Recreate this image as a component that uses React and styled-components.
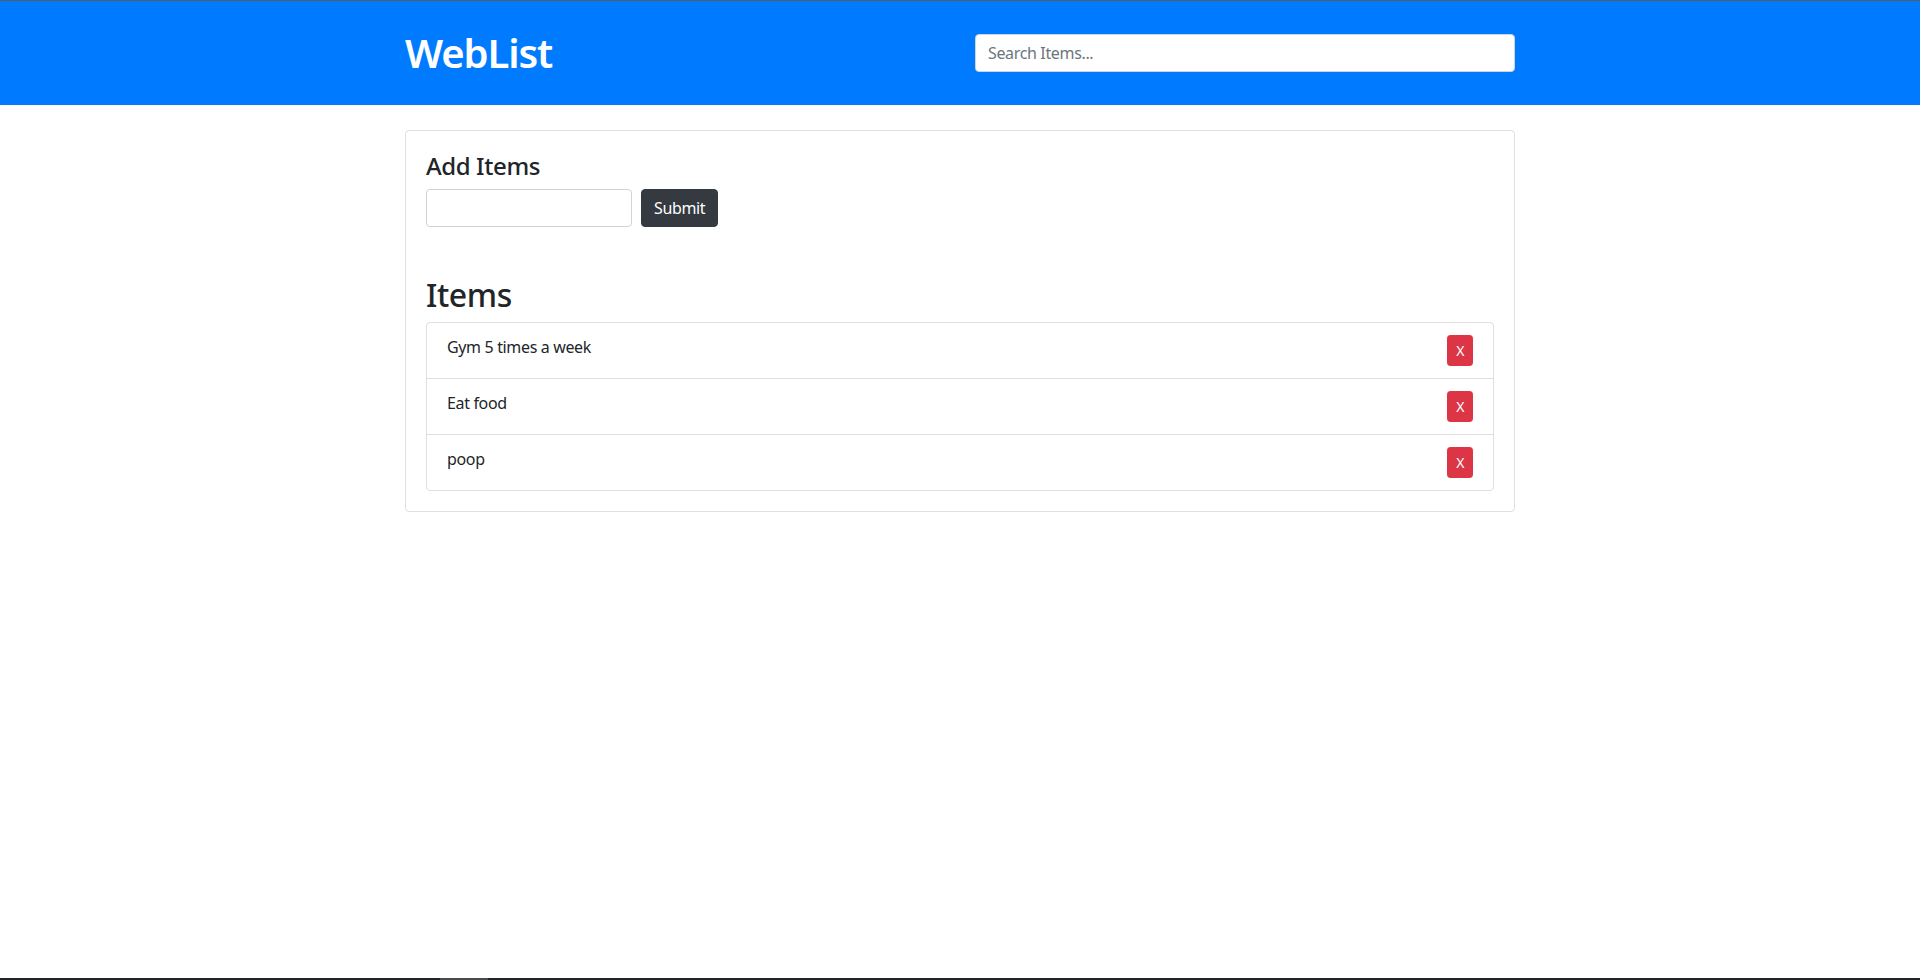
import React, { useState } from "react";
import styled, { createGlobalStyle } from "styled-components";

const GlobalStyle = createGlobalStyle`
  *, *::before, *::after { box-sizing: border-box; }
  body {
    margin: 0;
    font-family: "Noto Sans", "Open Sans", sans-serif;
    font-size: 16px;
    line-height: 1.5;
    letter-spacing: -0.35px;
    color: #212529;
    background: #fff;
  }
`;

const Header = styled.header`
  background: #007bff;
  border-top: 1px solid #5b5b5b;
  height: 105px;
`;

const Container = styled.div`
  width: 1110px;
  margin: 0 auto;
`;

const HeaderInner = styled(Container)`
  height: 100%;
  display: flex;
  align-items: center;
  justify-content: space-between;
`;

const Brand = styled.h1`
  margin: 0;
  color: #fff;
  font-size: 40px;
  font-weight: 600;
  line-height: 1.2;
  letter-spacing: -1.1px;
`;

const Input = styled.input`
  width: ${(p) => p.$width}px;
  height: 38px;
  padding: 6px 12px;
  font-family: inherit;
  font-size: 16px;
  letter-spacing: inherit;
  color: #495057;
  background: #fff;
  border: 1px solid #ced4da;
  border-radius: 4px;
  outline: none;
  &::placeholder { color: #6c757d; }
`;

const Main = styled(Container)`
  margin-top: 25px;
`;

const Card = styled.section`
  border: 1px solid rgba(0, 0, 0, 0.125);
  border-radius: 4px;
  padding: 21px 20px 20px;
`;

const Heading = styled.h2`
  margin: 0 0 8px;
  font-size: ${(p) => p.$size}px;
  font-weight: 500;
  line-height: 1.2;
  letter-spacing: -0.4px;
`;

const Form = styled.form`
  display: flex;
  gap: 9px;
  margin-bottom: 49px;
`;

const Button = styled.button`
  font-family: inherit;
  letter-spacing: inherit;
  color: #fff;
  border: 1px solid ${(p) => p.$bg};
  background: ${(p) => p.$bg};
  cursor: pointer;
  font-size: ${(p) => (p.$small ? 14 : 16)}px;
  line-height: 1.5;
  padding: ${(p) => (p.$small ? "4px 8px" : "6px 12px")};
  border-radius: ${(p) => (p.$small ? 3.2 : 4)}px;
  height: ${(p) => (p.$small ? 31 : 38)}px;
`;

const List = styled.ul`
  list-style: none;
  margin: 0;
  padding: 0;
  border: 1px solid rgba(0, 0, 0, 0.125);
  border-radius: 4px;
`;

const Row = styled.li`
  display: flex;
  justify-content: space-between;
  align-items: flex-start;
  padding: 12px 20px;
  & + & { border-top: 1px solid rgba(0, 0, 0, 0.125); }
`;

const BottomBar = styled.div`
  position: fixed;
  left: 0;
  right: 0;
  bottom: 0;
  height: 2px;
  background: #232527;
`;

const BarThumb = styled.div`
  margin-left: 440px;
  width: 48px;
  height: 100%;
  background: #4a4a4a;
`;

export default function App() {
  const [items, setItems] = useState(["Gym 5 times a week", "Eat food", "poop"]);
  const [text, setText] = useState("");
  const [query, setQuery] = useState("");

  const submit = (e) => {
    e.preventDefault();
    if (text.trim()) {
      setItems([...items, text.trim()]);
      setText("");
    }
  };

  const shown = items.filter((i) => i.toLowerCase().includes(query.toLowerCase()));

  return (
    <>
      <GlobalStyle />
      <Header>
        <HeaderInner>
          <Brand>WebList</Brand>
          <Input
            $width={540}
            placeholder="Search Items..."
            value={query}
            onChange={(e) => setQuery(e.target.value)}
          />
        </HeaderInner>
      </Header>
      <Main>
        <Card>
          <Heading as="h4" $size={24}>Add Items</Heading>
          <Form onSubmit={submit}>
            <Input $width={206} value={text} onChange={(e) => setText(e.target.value)} />
            <Button type="submit" $bg="#343a40">Submit</Button>
          </Form>
          <Heading $size={32}>Items</Heading>
          <List>
            {shown.map((item, idx) => (
              <Row key={idx}>
                <span>{item}</span>
                <Button
                  type="button"
                  $small
                  $bg="#dc3545"
                  onClick={() => setItems(items.filter((i) => i !== item))}
                >
                  X
                </Button>
              </Row>
            ))}
          </List>
        </Card>
      </Main>
      <BottomBar>
        <BarThumb />
      </BottomBar>
    </>
  );
}
